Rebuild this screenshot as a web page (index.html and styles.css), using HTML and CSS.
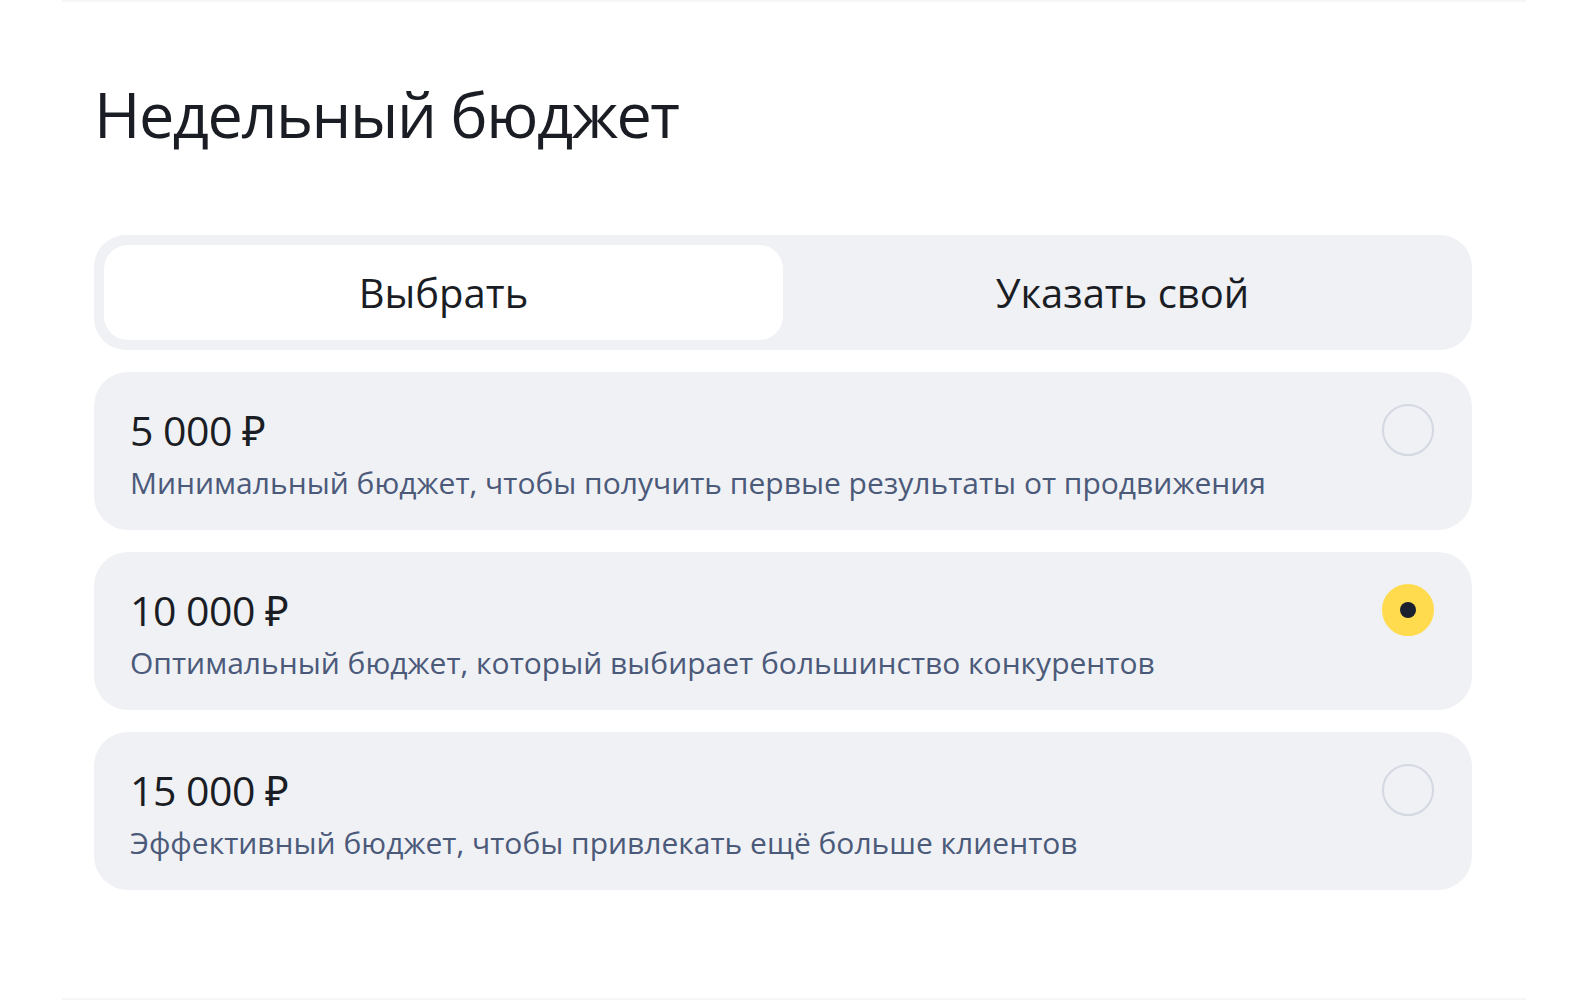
FILE: index.html
```html
<!DOCTYPE html>
<html lang="ru">
<head>
  <meta charset="UTF-8">
  <meta name="viewport" content="width=device-width, initial-scale=1.0">
  <title>Недельный бюджет</title>
  <link rel="stylesheet" href="styles.css">
</head>
<body>

  <div class="panel">
    <h1 class="title">Недельный бюджет</h1>

    <div class="switcher">
      <div class="switcher-tab active">Выбрать</div>
      <div class="switcher-tab">Указать свой</div>
    </div>

    <div class="options">
      <div class="option">
        <div class="option-text">
          <div class="option-price">5 000 ₽</div>
          <div class="option-desc">Минимальный бюджет, чтобы получить первые результаты от продвижения</div>
        </div>
        <span class="radio"></span>
      </div>

      <div class="option">
        <div class="option-text">
          <div class="option-price">10 000 ₽</div>
          <div class="option-desc">Оптимальный бюджет, который выбирает большинство конкурентов</div>
        </div>
        <span class="radio checked"></span>
      </div>

      <div class="option">
        <div class="option-text">
          <div class="option-price">15 000 ₽</div>
          <div class="option-desc">Эффективный бюджет, чтобы привлекать ещё больше клиентов</div>
        </div>
        <span class="radio"></span>
      </div>
    </div>
  </div>

</body>
</html>
```

FILE: styles.css
```css
body {
  margin: 0;
  background-color: #fff;
  font-family: "Open Sans", "Noto Sans", Arial, sans-serif;
  color: #1a1d24;
}

.panel {
  box-sizing: border-box;
  width: 1464px;
  height: 1000px;
  margin: 0 auto;
  padding: 0 54px 0 32px;
  border-top: 2px solid #f6f6f7;
  border-bottom: 2px solid #f6f6f7;
}

.title {
  margin: 0;
  padding-top: 68px;
  font-size: 63px;
  font-weight: 400;
  line-height: 88px;
  letter-spacing: -1.5px;
}

.switcher {
  display: flex;
  margin-top: 77px;
  padding: 10px;
  background-color: #f0f1f5;
  border-radius: 32px;
}

.switcher-tab {
  flex: 1;
  height: 95px;
  display: flex;
  align-items: center;
  justify-content: center;
  font-size: 40px;
  border-radius: 24px;
}

.switcher-tab.active {
  background-color: #fff;
}

.options {
  display: flex;
  flex-direction: column;
  gap: 22px;
  margin-top: 22px;
}

.option {
  display: flex;
  justify-content: space-between;
  align-items: flex-start;
  height: 158px;
  box-sizing: border-box;
  padding: 30px 38px 0 36px;
  background-color: #f0f1f5;
  border-radius: 34px;
}

.option-price {
  font-size: 41px;
  line-height: 56px;
  letter-spacing: -0.5px;
}

.option-desc {
  margin-top: 3px;
  font-size: 30px;
  line-height: 44px;
  color: #4c5a7a;
}

.radio {
  box-sizing: border-box;
  flex: none;
  width: 52px;
  height: 52px;
  margin-top: 2px;
  border: 2px solid #d3d8e3;
  border-radius: 50%;
}

.radio.checked {
  display: flex;
  align-items: center;
  justify-content: center;
  background-color: #ffdb4d;
  border-color: #ffdb4d;
}

.radio.checked::after {
  content: "";
  width: 16px;
  height: 16px;
  border-radius: 50%;
  background-color: #1a2030;
}
```
